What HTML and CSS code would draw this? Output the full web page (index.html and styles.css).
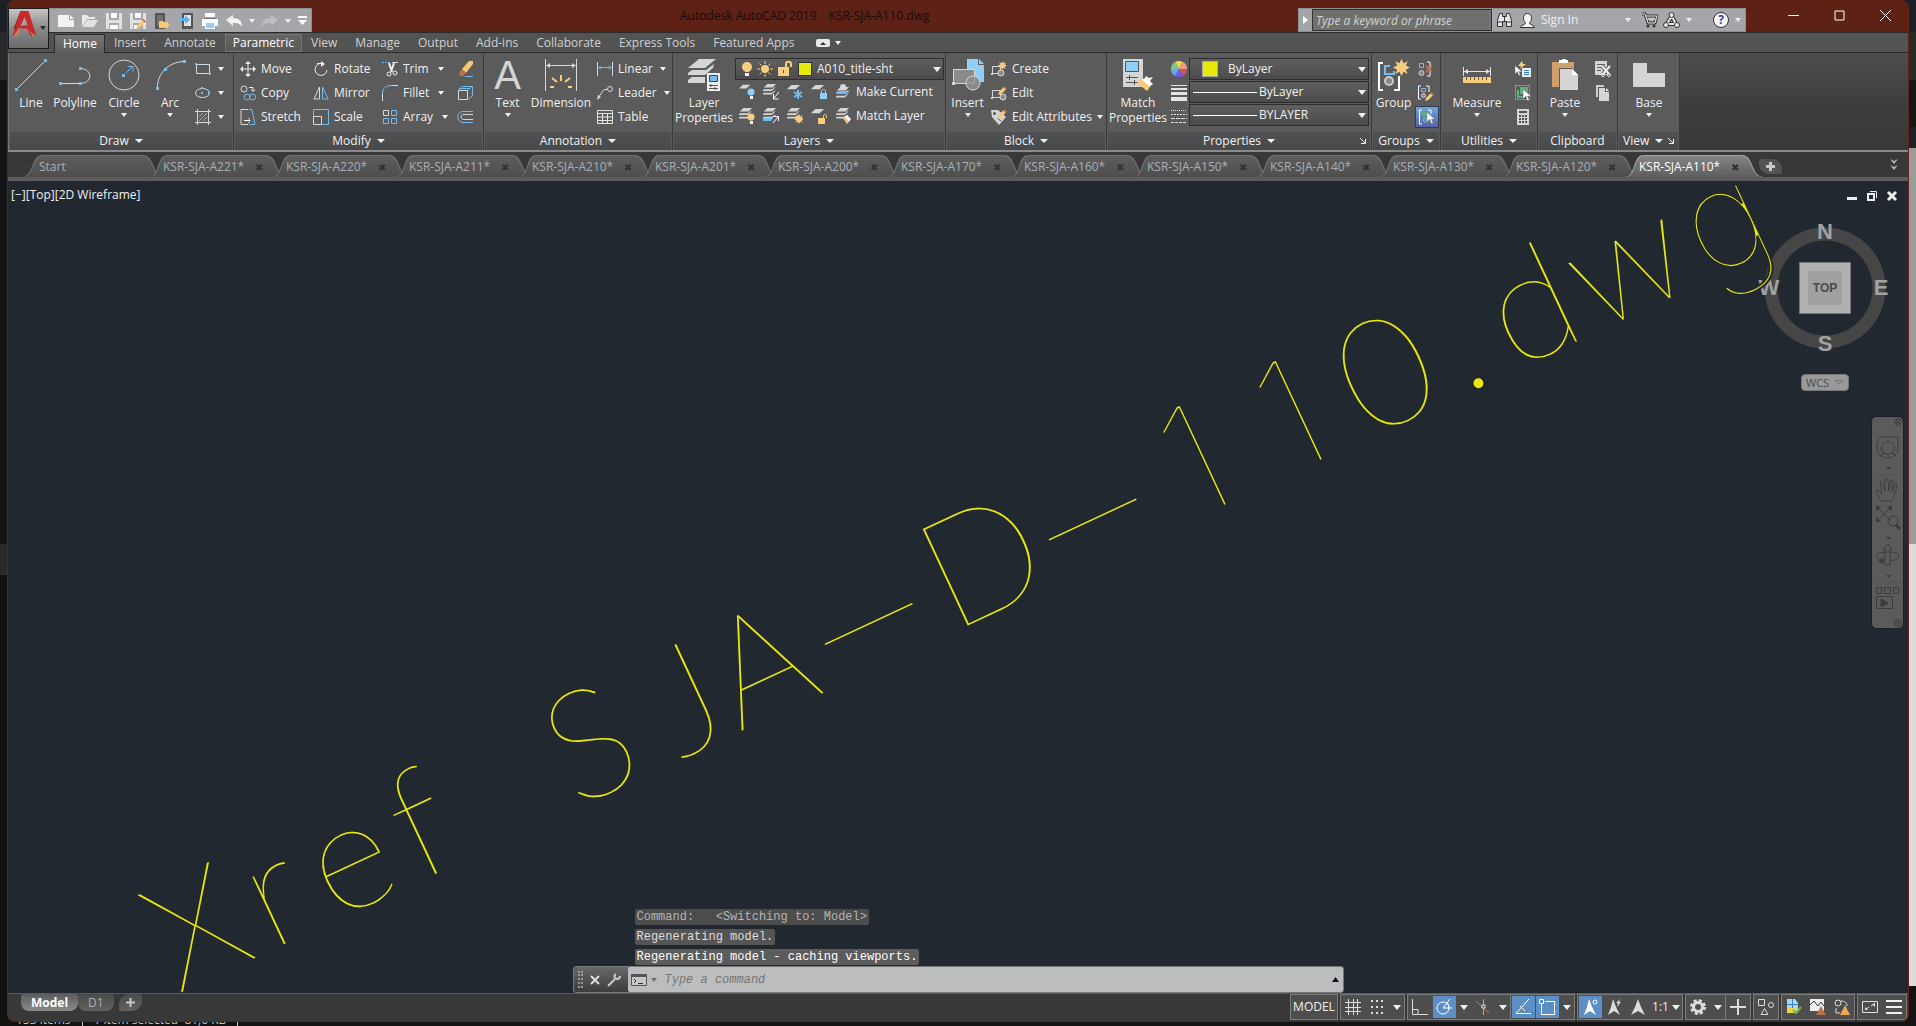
FILE: index.html
```html
<!DOCTYPE html>
<html lang="en">
<head>
  <meta charset="UTF-8">
  <meta name="viewport" content="width=device-width, initial-scale=1.0">
  <title>Autodesk AutoCAD 2019 - KSR-SJA-A110.dwg</title>
  <link rel="stylesheet" href="styles.css">
</head>
<body>

<!-- Shared shapes -->
<svg class="defs" aria-hidden="true">
  <symbol id="sheet" viewBox="0 0 16 16"><path class="g" d="M5 1h10l-5 5H0z"/></symbol>
  <symbol id="sheets" viewBox="0 0 16 16"><path class="g" d="M5 0h10l-4 4H1z"/><path class="g" d="M0 7l1-1h9l4-3v1l-4 4H0zM0 11l1-1h9l4-3v1l-4 4H0z"/></symbol>
  <symbol id="pencil" viewBox="0 0 8 8"><path fill="#f7c877" d="M0 8l1-3 4-4 2 2-4 4z"/><path fill="#b9704c" d="M5 1l1-1 2 2-1 1z"/></symbol>
  <symbol id="burst" viewBox="0 0 16 16"><path fill="#f9cd80" d="M8 0l2 4 4-2-2 4 4 2-4 2 2 4-4-2-2 4-2-4-4 2 2-4-4-2 4-2-2-4 4 2z"/></symbol>
  <symbol id="cursor" viewBox="0 0 9 13"><path fill="#fff" stroke="#555" stroke-width=".5" d="M0 0v11l3-3 2 5 2-1-2-4h4z"/></symbol>
</svg>

<div class="desktop">
  <div class="desktop-left"></div>
  <div class="desktop-right"></div>
  <p class="desktop-status"><span>153 items</span><span>1 item selected&nbsp; 81,6 KB</span></p>
</div>

<div class="window">
  <!-- Title bar -->
  <header class="titlebar">
    <button class="app-button" aria-label="Application menu">
      <svg width="25" height="28" viewBox="0 0 24 28"><path fill="#8c1518" d="M8 1h7l3 10-4 1-2-6-6 12-5 1z"/><path fill="#c8292c" d="M8 1h8l8 25h-6l-3-7-8-1-2 8H0z"/><path fill="#a2a2a2" d="M12 7l3 8-7 1z"/><path fill="#c97c5f" d="M6 18l-5 8h4l3-6zM17 21l3 5h4z"/></svg>
      <i class="caret dark"></i>
    </button>
    <div class="qat">
      <button aria-label="New"><svg width="16" height="16"><path fill="#f2f2f2" d="M0 2h11v5h5v7H0z"/><path fill="#fff" d="M12 2l4 4h-4z"/></svg></button>
      <button aria-label="Open"><svg width="16" height="16"><path fill="#e9eaea" d="M0 14V2h5l2 2h6v2H5z"/><path fill="#dfe3e2" d="M5 7h11l-4 7H1z"/></svg></button>
      <button aria-label="Save"><svg width="16" height="16"><path fill="#e1e3e3" d="M0 0h16v16H0z"/><path fill="#a5a7aa" d="M3 0h10v7H3zM3 10h10v6H3z"/><path fill="#fff" d="M5 0h6v5H5zM4 12h8v4H4z"/></svg></button>
      <button aria-label="Save As"><svg width="16" height="16"><path fill="#e1e3e3" d="M0 0h16v16H0z"/><path fill="#a5a7aa" d="M3 0h10v7H3zM3 10h10v6H3z"/><path fill="#fff" d="M5 0h6v5H5zM4 12h4v4H4z"/><use href="#pencil" x="6" y="6" width="10" height="10"/></svg></button>
      <button aria-label="Open from Web"><svg width="16" height="16"><path fill="#555" d="M1 0h10v16H1z"/><path fill="#707070" d="M3 2h6v11H3z"/><path fill="#f7c877" d="M5 15V8h4l1 1h4v2h2l-3 4z"/></svg></button>
      <button aria-label="Save to Web"><svg width="16" height="16"><path fill="#555" d="M4 0h11v16H4z"/><path fill="#e2e5e4" d="M6 2h7v11H6z"/><path fill="#5bb2ee" d="M2 5h5V2l5 5-5 4V8H2z"/></svg></button>
      <button aria-label="Plot"><svg width="16" height="16"><path fill="#fff" d="M3 0h10v4H3zM0 6h16v7H0z"/><path fill="#77797b" d="M2 5h12v1H2z"/><path fill="#8fd0fa" stroke="#fff" d="M3.500 9.500h9v6h-9z"/></svg></button>
      <button aria-label="Undo"><svg width="16" height="16"><path fill="#f2f2f2" d="M0 7l7-5v3c6 0 9 3 9 9-2-4-5-4-9-4v3z"/></svg></button>
      <button class="narrow" aria-label="Undo list"><i class="caret"></i></button>
      <button aria-label="Redo"><svg width="16" height="16"><path fill="#bcbec0" d="M16 7L9 2v3c-6 0-9 3-9 9 2-4 5-4 9-4v3z"/></svg></button>
      <button class="narrow" aria-label="Redo list"><i class="caret"></i></button>
      <button class="narrow" aria-label="Customize"><svg width="9" height="9"><path fill="#fff" d="M0 0h9v2H0zM0 4h9L4.500 9z"/></svg></button>
    </div>
    <h1 class="app-title"><span>Autodesk AutoCAD 2019</span><span>KSR-SJA-A110.dwg</span></h1>
    <div class="infocenter">
      <button class="expand" aria-label="Collapse search"><svg width="5" height="8"><path fill="#fff" d="M0 0l5 4-5 4z"/></svg></button>
      <input type="text" placeholder="Type a keyword or phrase" aria-label="Search">
      <button class="find" aria-label="Find"><svg width="17" height="16"><path fill="#e6e6e6" stroke="#333" d="M3.500 1.500h3v3h4v-3h3l2 7v6h-5v-5h-4v5h-5v-6z"/><path stroke="#333" d="M1 10h5M11 10h5M8.500 5v4"/></svg></button>
      <button class="sign-in"><svg width="17" height="16"><path fill="#f4f4f4" stroke="#333" d="M1.500 15.500c0-3 5-2 5-5-3-2-3-9 2-9s5 7 2 9c0 3 5 2 5 5z"/></svg>Sign In<i class="caret"></i></button>
      <button aria-label="App Store"><svg width="17" height="16"><path fill="none" stroke="#333" stroke-width="3" d="M1 2h3l3 9h7l2-7H5"/><path fill="none" stroke="#eee" d="M1 2h3l3 9h7l2-7H5M6 7h9"/><circle cx="7" cy="14" r="1.500" fill="#333"/><circle cx="13" cy="14" r="1.500" fill="#333"/></svg></button>
      <button class="with-caret" aria-label="Stay Connected"><svg width="17" height="16"><path fill="none" stroke="#333" stroke-width="4" stroke-linejoin="round" d="M8.500 4L4 12h9z"/><path fill="none" stroke="#e5e5e5" stroke-width="2" stroke-linejoin="round" d="M8.500 4L4 12h9z"/><g fill="#e5e5e5" stroke="#333"><circle cx="8.500" cy="3" r="2.500"/><circle cx="3" cy="13" r="2.500"/><circle cx="14" cy="13" r="2.500"/></g></svg><i class="caret"></i></button>
      <button class="with-caret help" aria-label="Help"><b>?</b><i class="caret"></i></button>
    </div>
    <div class="window-buttons">
      <button aria-label="Minimize"><svg width="11" height="11"><path stroke="#fff" d="M0 5.500h11"/></svg></button>
      <button aria-label="Maximize"><svg width="11" height="11"><path fill="none" stroke="#fff" d="M1 1h9v9H1z"/></svg></button>
      <button aria-label="Close"><svg width="11" height="11"><path stroke="#fff" d="M0 0l11 11M11 0L0 11"/></svg></button>
    </div>
  </header>

  <!-- Ribbon tabs -->
  <nav class="ribbon-tabs">
    <button class="active">Home</button>
    <button>Insert</button>
    <button>Annotate</button>
    <button class="hover">Parametric</button>
    <button>View</button>
    <button>Manage</button>
    <button>Output</button>
    <button>Add-ins</button>
    <button>Collaborate</button>
    <button>Express Tools</button>
    <button>Featured Apps</button>
    <button class="ribbon-toggle" aria-label="Minimize ribbon"><svg width="14" height="8"><rect width="14" height="8" rx="2" fill="#e8e8e8"/><path fill="#333" d="M4 6l3-3 3 3z"/></svg><i class="caret"></i></button>
  </nav>

  <!-- Ribbon panels -->
  <main class="ribbon">
    <section class="panel draw">
      <div class="tools">
        <button class="big line"><svg width="32" height="32"><path stroke="#d8d8d8" d="M3 29L29 3"/><path class="b" d="M0 29h3v3H0zM29 0h3v3h-3z"/></svg>Line</button>
        <button class="big polyline"><svg width="32" height="32"><path fill="none" stroke="#d8d8d8" d="M1 24.500h20M21 9.500c13 0 13 15 0 15"/><path class="b" d="M0 23h3v3H0zM20 23h3v3h-3zM20 8h3v3h-3z"/></svg>Polyline</button>
        <button class="big circle"><svg width="32" height="32"><circle cx="16" cy="16" r="15" fill="none" stroke="#d8d8d8"/><path stroke="#74bcf0" d="M18 14l6-6M20 7.500h5v5" fill="none"/><path class="b" d="M14 15h3v3h-3z"/></svg>Circle<i class="caret"></i></button>
        <button class="big arc"><svg width="32" height="32"><path fill="none" stroke="#d8d8d8" d="M3.500 29C3 15 14 3 30 2.500"/><path class="b" d="M2 28h3v3H2zM10 9h3v3h-3zM29 1h3v3h-3z"/></svg>Arc<i class="caret"></i></button>
        <div class="stack">
          <button class="small" aria-label="Rectangle"><svg width="16" height="16"><path fill="none" stroke="#d8d8d8" d="M1.500 3.500h13v9h-13z"/><path class="b" d="M0 2h2v2H0zM14 12h2v2h-2z"/></svg><i class="caret"></i></button>
          <button class="small" aria-label="Ellipse"><svg width="16" height="16"><ellipse cx="7.500" cy="8" rx="7" ry="4.500" fill="none" stroke="#d8d8d8"/><path class="b" d="M6 2h2v2H6zM6 7h2v2H6zM13 7h2v2h-2z"/></svg><i class="caret"></i></button>
          <button class="small" aria-label="Hatch"><svg width="16" height="16"><path fill="none" stroke="#d8d8d8" d="M2.500 0v16M13.500 0v16M0 2.500h16M0 13.500h16"/><path stroke="#74bcf0" d="M4 8l4-4M4 12l8-8M8 12l4-4"/></svg><i class="caret"></i></button>
        </div>
      </div>
      <h2>Draw<i class="caret"></i></h2>
    </section>

    <section class="panel modify">
      <div class="tools">
        <div class="stack">
          <button class="small"><svg width="16" height="16"><path fill="none" stroke="#eee" d="M8 1v14M1 8h14"/><path fill="#eee" d="M8 0l3 3H5zM8 16l3-3H5zM0 8l3-3v6zM16 8l-3-3v6z"/></svg>Move</button>
          <button class="small"><svg width="16" height="16"><circle cx="4" cy="4" r="3" fill="none" stroke="#d8d8d8"/><path fill="none" stroke="#eee" d="M9 2.500h4V6M11 4.500l2 2 2-2"/><circle cx="7" cy="12" r="3" fill="none" stroke="#74bcf0"/><circle cx="12.500" cy="12" r="3" fill="none" stroke="#74bcf0"/></svg>Copy</button>
          <button class="small"><svg width="16" height="16"><path fill="none" stroke="#d8d8d8" d="M8 .5H1v15h7"/><path stroke="#fff" d="M4 11.500h6M8 9l2 2.500L8 14"/><path fill="none" stroke="#74bcf0" d="M9 .5h3l3 15H9"/></svg>Stretch</button>
        </div>
        <div class="stack">
          <button class="small"><svg width="16" height="16"><path fill="none" stroke="#eee" d="M9 2.500A6 6 0 1 0 14 9M9 2.500H4"/><path fill="#eee" d="M8 0l4 3-4 3z"/></svg>Rotate</button>
          <button class="small"><svg width="16" height="16"><path fill="none" stroke="#d8d8d8" d="M6.500 2v12H1z"/><path fill="none" stroke="#74bcf0" d="M9.500 2v12H15z"/></svg>Mirror</button>
          <button class="small"><svg width="16" height="16"><path fill="none" stroke="#74bcf0" d="M.5 7V.5h15v15H9"/><path fill="none" stroke="#d8d8d8" d="M.5 7.500h8v8h-8z"/></svg>Scale</button>
        </div>
        <div class="stack">
          <button class="small"><svg width="16" height="16"><path stroke="#74bcf0" stroke-dasharray="2 1" d="M0 1.500h8"/><path stroke="#d8d8d8" d="M10 1.500h6"/><path stroke="#eee" stroke-width="2" d="M7 2l3 9M12 2L9 11"/><circle cx="7" cy="13" r="2" fill="none" stroke="#eee"/><circle cx="13" cy="12" r="2" fill="none" stroke="#eee"/></svg>Trim<i class="caret"></i></button>
          <button class="small"><svg width="16" height="16"><path stroke="#d8d8d8" d="M.5 9v7M10 .5h6"/><path fill="none" stroke="#74bcf0" d="M.5 9C.5 3 4 .5 10 .5"/></svg>Fillet<i class="caret"></i></button>
          <button class="small"><svg width="16" height="16"><path fill="none" stroke="#d8d8d8" d="M1.500 1.500h5v5h-5z"/><path fill="none" stroke="#74bcf0" d="M9.500 1.500h5v5h-5zM1.500 9.500h5v5h-5zM9.500 9.500h5v5h-5z"/></svg>Array<i class="caret"></i></button>
        </div>
        <div class="stack">
          <button class="small" aria-label="Erase"><svg width="16" height="16"><path fill="#f7c877" d="M5 8l7-8h4v3l-7 9z"/><path fill="#b9704c" d="M2 12l3-4 4 4-3 3H3z"/><path stroke="#74bcf0" d="M8 15.500h8"/></svg></button>
          <button class="small" aria-label="Explode"><svg width="16" height="16"><path fill="none" stroke="#74bcf0" d="M1.500 5l4-3.500h10v9l-4 4M11 5l4-3.500M2 3.500h10"/><path fill="none" stroke="#d8d8d8" d="M1.500 5.500h9v9h-9z"/></svg></button>
          <button class="small" aria-label="Offset"><svg width="16" height="16"><path fill="none" stroke="#74bcf0" d="M16 2.500H6c-7 0-7 11 0 11h10"/><path fill="none" stroke="#d8d8d8" d="M16 5.500H7c-4 0-4 5 0 5h9"/></svg></button>
        </div>
      </div>
      <h2>Modify<i class="caret"></i></h2>
    </section>

    <section class="panel annotation">
      <div class="tools">
        <button class="big text"><span class="letter-icon" aria-hidden="true">A</span>Text<i class="caret"></i></button>
        <button class="big dimension"><svg width="32" height="32"><path stroke="#d8d8d8" d="M.5 0v32M31.500 0v32M2 6.500h28"/><path fill="#d8d8d8" d="M1 6.500L5 4v5zM31 6.500L27 4v5z"/><path stroke="#f9cd80" stroke-width="2" d="M5 28h4M23 28h4M7 19l5 4M25 19l-5 4M16 16v6"/></svg>Dimension</button>
        <div class="stack">
          <button class="small"><svg width="16" height="16"><path stroke="#d8d8d8" d="M.5 1v14M15.500 1v14"/><path stroke="#74bcf0" d="M2 6.500h12M4 4.500l-2 2 2 2M12 4.500l2 2-2 2" fill="none"/></svg>Linear<i class="caret"></i></button>
          <button class="small"><svg width="16" height="16"><circle cx="13" cy="4" r="2.500" fill="none" stroke="#d8d8d8"/><path fill="none" stroke="#d8d8d8" d="M10 4.500H7L1 13"/><path fill="#d8d8d8" d="M0 15l1-5 3 2z"/></svg>Leader<i class="caret"></i></button>
          <button class="small"><svg width="16" height="16"><path fill="none" stroke="#e4e4e4" d="M.5 1.500h15v13H.5zM0 4.500h16M0 8h16M0 11.500h16M5.500 4v10M10.500 4v10"/></svg>Table</button>
        </div>
      </div>
      <h2>Annotation<i class="caret"></i></h2>
    </section>

    <section class="panel layers">
      <div class="tools">
        <button class="big layer-props"><svg width="32" height="32"><path class="g" d="M11 0h17L17 9H0zM0 14l4-3h14l8-6-1 4-8 7H0zM0 21l4-3h13v6H0z"/><path fill="#eee" d="M19 14h13v18H19z"/><path fill="#74bcf0" stroke="#444" d="M21.500 16.500h8v6h-8z"/><path stroke="#555" d="M21 26.500h9M21 29.500h9M23 25v3M27 28v3"/></svg>Layer Properties</button>
        <div class="layer-area">
          <div class="combo layer-combo">
            <svg width="62" height="16"><circle cx="6" cy="6" r="5" fill="#f9cd80"/><path fill="#fff" d="M4 12h4v3H4z"/><path fill="#f9cd80" d="M4 9h4v2H4z"/><circle cx="24" cy="8" r="4" fill="#f9cd80"/><path stroke="#f9cd80" d="M24 0v3M24 13v3M16 8h3M29 8h3M18.500 2.500l2 2M27.500 11.500l2 2M29.500 2.500l-2 2M20.500 11.500l-2 2"/><path fill="#f9cd80" d="M37 6h11v9H37z"/><path fill="none" stroke="#f9cd80" stroke-width="2" d="M45 6V3c0-3 5-3 5 0v3"/><path stroke="#555" d="M42.500 9v3"/></svg>
            <i class="swatch"></i>
            <select aria-label="Layer"><option>A010_title-sht</option></select>
          </div>
          <div class="layer-row">
            <button aria-label="Off"><svg width="16" height="16"><use href="#sheet" width="12" height="12"/><circle cx="12" cy="8" r="3.500" fill="#8fd0fa"/><path fill="#fff" d="M11 12h3v3h-3z"/></svg></button>
            <button aria-label="Isolate"><svg width="16" height="16"><use href="#sheets" width="14" height="14"/><path fill="none" stroke="#fff" d="M16 8l-5 6M10.500 10v5h5"/></svg></button>
            <button aria-label="Freeze"><svg width="16" height="16"><use href="#sheet" width="14" height="14"/><path stroke="#74bcf0" stroke-width="2" d="M11 6v9M7 8l8 5M15 8l-8 5"/></svg></button>
            <button aria-label="Lock"><svg width="16" height="16"><use href="#sheet" width="14" height="14"/><path fill="#8fd0fa" d="M9 9h7v6H9z"/><path fill="none" stroke="#8fd0fa" d="M10.500 9V7c0-2 4-2 4 0v2"/></svg></button>
            <button class="labelled"><svg width="16" height="16"><use href="#sheets" y="3" width="16" height="14"/><circle cx="8" cy="3" r="3" fill="#d8d8d8"/><path fill="#74bcf0" d="M3 7h12l-4 3H1z"/></svg>Make Current</button>
          </div>
          <div class="layer-row">
            <button aria-label="On"><svg width="16" height="16"><use href="#sheets" width="14" height="14"/><circle cx="12" cy="9" r="3.500" fill="#f9cd80"/><path fill="#fff" d="M11 13h3v3h-3z"/></svg></button>
            <button aria-label="Unisolate"><svg width="16" height="16"><use href="#sheets" width="14" height="14"/><path fill="#74bcf0" d="M0 10h10l-2 3H0z"/><path fill="none" stroke="#fff" d="M10 15l5-6M11 8.500h4.500V13"/></svg></button>
            <button aria-label="Thaw"><svg width="16" height="16"><use href="#sheets" width="14" height="14"/><use href="#burst" x="7" y="6" width="10" height="10"/></svg></button>
            <button aria-label="Unlock"><svg width="16" height="16"><use href="#sheet" width="14" height="14"/><path fill="#f9cd80" d="M7 10h7v6H7z"/><path fill="none" stroke="#f9cd80" d="M12.500 10V8c0-2 3-2 3 0v2"/></svg></button>
            <button class="labelled"><svg width="16" height="16"><use href="#sheets" width="16" height="14"/><path fill="#fff" d="M9 9l3-2 4 4-2 3z"/><path fill="#f7c877" d="M8 10l2-1 4 5-2 2z"/></svg>Match Layer</button>
          </div>
        </div>
      </div>
      <h2>Layers<i class="caret"></i></h2>
    </section>

    <section class="panel block">
      <div class="tools">
        <button class="big insert"><svg width="32" height="32"><path fill="#8fd0fa" d="M15 0h11v6h6v17H15z"/><path fill="#8fd0fa" d="M27 0l5 5h-5z"/><path fill="#8a8a8a" stroke="#d8d8d8" d="M1.500 10.500h21v14h-21z"/><circle cx="21" cy="24" r="7" fill="#8a8a8a" stroke="#d8d8d8"/><path stroke="#aaa" d="M22.500 17v7H14" fill="none"/><path class="g" d="M0 23h3v3H0z"/></svg>Insert<i class="caret"></i></button>
        <div class="stack">
          <button class="small"><svg width="16" height="16"><path fill="none" stroke="#d8d8d8" d="M1.500 5.500h8v7h-8z"/><circle cx="10" cy="12" r="3" fill="#8a8a8a" stroke="#d8d8d8"/><path class="g" d="M0 12h2v2H0z"/><use href="#burst" x="7" y="0" width="9" height="9"/></svg>Create</button>
          <button class="small"><svg width="16" height="16"><path fill="none" stroke="#d8d8d8" d="M1.500 5.500h8v7h-8z"/><circle cx="12" cy="12" r="3" fill="#8a8a8a" stroke="#d8d8d8"/><path class="g" d="M0 12h2v2H0z"/><use href="#pencil" x="7" y="1" width="9" height="9"/></svg>Edit</button>
          <button class="small"><svg width="16" height="16"><path class="g" d="M0 1h7l8 7-7 8-7-8z"/><circle cx="3.500" cy="4.500" r="1.500" fill="#5a5a5a"/><path stroke="#5a5a5a" d="M6 9l4 3"/><use href="#pencil" x="6" y="0" width="10" height="10"/></svg>Edit Attributes<i class="caret"></i></button>
        </div>
      </div>
      <h2>Block<i class="caret"></i></h2>
    </section>

    <section class="panel properties">
      <div class="tools">
        <button class="big match"><svg width="32" height="32"><path class="g" d="M1 0h20v28H1z"/><path fill="#8fd0fa" stroke="#555" d="M3.500 2.500h13v10h-13z"/><path stroke="#555" d="M4 18.500h12M4 23.500h12M7.500 16v5M12.500 21v5"/><path fill="#fff" d="M19 21l4-2 1-2 3 2 4-1-3 4 3 3-4 3z"/><path fill="#f7c877" d="M15 24l4-4 9 8-3 4z"/></svg>Match Properties</button>
        <div class="stack icons">
          <span class="small"><svg width="16" height="16"><path fill="#f1d24b" d="M8 8L4 1a8 8 0 0 1 8 0z"/><path fill="#e7a07b" d="M8 8l4-7a8 8 0 0 1 4 7z"/><path fill="#c9555f" d="M8 8h8a8 8 0 0 1-4 7z"/><path fill="#7555ef" d="M8 8l4 7a8 8 0 0 1-8 0z"/><path fill="#6ea5ea" d="M8 8l-4 7a8 8 0 0 1-4-7z"/><path fill="#7cc693" d="M8 8H0a8 8 0 0 1 4-7z"/></svg></span>
          <span class="small"><svg width="16" height="16"><path fill="#e4e4e4" d="M0 0h16v1H0zM0 3h16v2H0zM0 7h16v3H0zM0 12h16v4H0z"/></svg></span>
          <span class="small"><svg width="16" height="16"><path stroke="#ddd" stroke-dasharray="1 1" d="M0 1.500h16"/><path stroke="#ddd" stroke-dasharray="2 1" d="M0 5.500h16"/><path stroke="#ddd" stroke-dasharray="4 1" d="M0 9.500h16"/><path stroke="#ddd" stroke-dasharray="3 1" d="M0 13.500h16"/></svg></span>
        </div>
        <div class="combos">
          <div class="combo color-combo"><i class="swatch"></i><select aria-label="Object color"><option>ByLayer</option></select></div>
          <div class="combo"><i class="rule"></i><select aria-label="Lineweight"><option>ByLayer</option></select></div>
          <div class="combo"><i class="rule"></i><select aria-label="Linetype"><option>BYLAYER</option></select></div>
        </div>
      </div>
      <h2>Properties<i class="caret"></i><svg class="launcher" width="6" height="6"><path fill="none" stroke="#eee" d="M0 0l5 5M5.500 1v4.500H1"/></svg></h2>
    </section>

    <section class="panel groups">
      <div class="tools">
        <button class="big group"><svg width="34" height="32"><path fill="none" stroke="#fff" stroke-width="2" d="M6 4H2v27h4M17 31h5V17"/><path fill="none" stroke="#74bcf0" stroke-width="2" d="M13 7H8v8h9v-3"/><circle cx="12" cy="22" r="4" fill="#888" stroke="#ccc" stroke-width="2"/><use href="#burst" x="16" y="0" width="17" height="17"/></svg>Group</button>
        <div class="stack">
          <button class="small" aria-label="Ungroup"><svg width="16" height="16"><path fill="none" stroke="#74bcf0" d="M1.500 2.500h4v4h-4z"/><circle cx="3.500" cy="12" r="2.500" fill="#888" stroke="#ccc"/><path fill="none" stroke="#fff" d="M9 1h3v14H9"/><path stroke="#b9704c" stroke-width="2" d="M8 5l6 6M14 5l-6 6"/></svg></button>
          <button class="small" aria-label="Group Edit"><svg width="16" height="16"><path fill="none" stroke="#fff" d="M3 1H.5v13H3M8 1h3v6"/><path fill="none" stroke="#74bcf0" d="M3.500 3.500h4v3h-4z"/><circle cx="5.500" cy="10.500" r="2" fill="#888" stroke="#ccc"/><use href="#pencil" x="7" y="7" width="9" height="9"/></svg></button>
          <button class="small selected" aria-label="Group Selection"><svg width="16" height="16"><path fill="none" stroke="#fff" d="M3 1H.5v14H3M9 1h3v4"/><path fill="#5fae7b" d="M3 3h6v4H3z"/><circle cx="6" cy="11" r="2" fill="none" stroke="#7cc693"/><use href="#cursor" x="8" y="3" width="8" height="12"/></svg></button>
        </div>
      </div>
      <h2>Groups<i class="caret"></i></h2>
    </section>

    <section class="panel utilities">
      <div class="tools">
        <button class="big measure"><svg width="32" height="32"><path stroke="#e4e4e4" d="M2.500 8v9M29.500 8v9M3 12.500h26"/><path fill="#e4e4e4" d="M3 12.500L7 10v5zM29 12.500L25 10v5z"/><path fill="#f9cd80" d="M2 18h28v6H2z"/><path stroke="#6b5a35" d="M5.500 18v3M9.500 18v3M13.500 18v3M17.500 18v3M21.500 18v3M25.500 18v3"/></svg>Measure<i class="caret"></i></button>
        <div class="stack">
          <button class="small" aria-label="Quick Select"><svg width="16" height="16"><path fill="#f9cd80" d="M7 0l-4 5h3L5 8l6-5H8z"/><path fill="#eee" d="M7 7h9v9H7z"/><path stroke="#3c7fc0" d="M9 9.500h5M9 11.500h5M9 13.500h5"/><use href="#cursor" y="4" width="7" height="11"/></svg></button>
          <button class="small" aria-label="Select All"><svg width="16" height="16"><path fill="none" stroke="#7cc693" stroke-dasharray="2 1" d="M.5 .5h14v14H.5z"/><path fill="#5fae7b" d="M5 2h8v7H5z"/><path fill="none" stroke="#5fae7b" stroke-width="2" d="M3 5v7h7"/><use href="#cursor" x="8" y="4" width="8" height="12"/></svg></button>
          <button class="small" aria-label="Calculator"><svg width="16" height="16"><path class="g" d="M2 0h12v16H2z"/><path fill="#555" d="M4 2h8v2H4zM4 6h2v2H4zM7 6h2v2H7zM10 6h2v2h-2zM4 9h2v2H4zM7 9h2v2H7zM10 9h2v2h-2zM4 12h2v2H4zM7 12h2v2H7zM10 12h2v2h-2z"/></svg></button>
        </div>
      </div>
      <h2>Utilities<i class="caret"></i></h2>
    </section>

    <section class="panel clipboard">
      <div class="tools">
        <button class="big paste"><svg width="28" height="32"><path fill="#cfa06a" d="M1 3h22v25H1z"/><path fill="#fff" d="M8 1h3c1-2 3-2 4 0h2v3H8z"/><path class="g" stroke="#5a5a5a" d="M8.500 9.500h13l6 6v16h-19z"/><path fill="#fff" d="M21 10v6h6z"/></svg>Paste<i class="caret"></i></button>
        <div class="stack">
          <button class="small" aria-label="Cut"><svg width="16" height="16"><path class="g" d="M0 0h12v14H0z"/><path stroke="#666" d="M2 3.500h8M2 6.500h5M2 9.500h4"/><path stroke="#5b5b5b" stroke-width="4" d="M7 5l7 8M15 5l-7 8"/><path stroke="#eee" stroke-width="2" d="M7 5l7 8M15 5l-7 8"/><circle cx="8" cy="14" r="1.500" fill="none" stroke="#eee"/><circle cx="14" cy="14" r="1.500" fill="none" stroke="#eee"/></svg></button>
          <button class="small" aria-label="Copy Clip"><svg width="16" height="16"><path fill="#ccc" d="M1 0h8v2H3v10H1z"/><path class="g" d="M4 3h6v4h4v9H4z"/><path fill="#fff" d="M11 3l3 3h-3z"/></svg></button>
        </div>
      </div>
      <h2>Clipboard</h2>
    </section>

    <section class="panel view">
      <div class="tools">
        <button class="big base"><svg width="32" height="32"><path class="g" d="M0 4h14v10h18v14H0z"/></svg>Base<i class="caret"></i></button>
      </div>
      <h2>View<i class="caret"></i><svg class="launcher" width="6" height="6"><path fill="none" stroke="#eee" d="M0 0l5 5M5.500 1v4.500H1"/></svg></h2>
    </section>
  </main>

  <!-- Drawing tabs -->
  <nav class="file-tabs">
    <button class="file-tab start">Start</button>
    <button class="file-tab">KSR-SJA-A221*<i>✖</i></button>
    <button class="file-tab">KSR-SJA-A220*<i>✖</i></button>
    <button class="file-tab">KSR-SJA-A211*<i>✖</i></button>
    <button class="file-tab">KSR-SJA-A210*<i>✖</i></button>
    <button class="file-tab">KSR-SJA-A201*<i>✖</i></button>
    <button class="file-tab">KSR-SJA-A200*<i>✖</i></button>
    <button class="file-tab">KSR-SJA-A170*<i>✖</i></button>
    <button class="file-tab">KSR-SJA-A160*<i>✖</i></button>
    <button class="file-tab">KSR-SJA-A150*<i>✖</i></button>
    <button class="file-tab">KSR-SJA-A140*<i>✖</i></button>
    <button class="file-tab">KSR-SJA-A130*<i>✖</i></button>
    <button class="file-tab">KSR-SJA-A120*<i>✖</i></button>
    <button class="file-tab active">KSR-SJA-A110*<i>✖</i></button>
    <button class="new-tab" aria-label="New tab"><svg width="9" height="9"><path stroke="#c8c8c8" stroke-width="3" d="M4.500 0v9M0 4.500h9"/></svg></button>
    <button class="tab-overflow" aria-label="More tabs"><svg width="8" height="12"><path fill="#b5b5b5" d="M0 0l4 2 4-2-4 5zM0 6l4 2 4-2-4 5z"/></svg></button>
  </nav>

  <!-- Model space -->
  <section class="canvas">
    <p class="viewport-label">[&minus;][Top][2D Wireframe]</p>
    <div class="viewport-buttons">
      <button aria-label="Minimize view"><svg width="12" height="12"><path fill="#eee" d="M1 7h10v3H1z"/></svg></button>
      <button aria-label="Restore view"><svg width="12" height="12"><path fill="none" stroke="#eee" stroke-width="2" d="M2 4h6v6H2z"/><path fill="none" stroke="#eee" d="M4 1.500h6.500V8"/></svg></button>
      <button aria-label="Close view"><svg width="12" height="12"><path stroke="#eee" stroke-width="3" d="M2 2l8 8M10 2l-8 8"/></svg></button>
    </div>
    <div class="viewcube">
      <div class="compass">
        <b class="n">N</b><b class="w">W</b><button class="cube">TOP</button><b class="e">E</b><b class="s">S</b>
      </div>
      <button class="wcs">WCS<svg width="9" height="5"><path fill="none" stroke="#777" d="M0 .5h8L4 4z"/></svg></button>
    </div>
    <div class="navbar">
      <svg width="31" height="211" fill="none" stroke="#3c3c3c">
        <circle cx="26" cy="5" r="3.500"/><path d="M24 3l4 4M28 3l-4 4"/>
        <path d="M26 21v10c0 13-21 13-21 0s6-11 11-11h10z"/><circle cx="16" cy="31" r="6.500"/><path d="M8 39l4-3M24 39l-4-3"/>
        <path fill="#3c3c3c" stroke="none" d="M14 50h5l-2.500 3zM14 120h5l-2.500 3zM14 158h5l-2.500 3z"/>
        <path stroke="#555" d="M4 57.500h24M4 165.500h24"/>
        <path d="M9 84c-2-6-8-9-3-11l4 4-2-12c2-2 3 0 5 9 0-13 0-13 3-12l1 12 2-11c3 0 2 2 1 12l4-9c2 1 1 3-1 10-1 4-2 6-4 8z"/>
        <path d="M5 90l14 14M19 90L5 104"/><path fill="#3c3c3c" stroke="none" d="M4 89h5l-5 5zM20 89h-5l5 5zM4 105h5l-5-5z"/><circle cx="21" cy="104" r="5"/><path stroke-width="3" d="M24 108l4 4"/>
        <path d="M13 148v-16h-2l5-5 4 5h-2v16zM10 144c-9-3-7-9 6-9s15 7 2 9"/><path fill="#3c3c3c" d="M7 144l4-3v6z"/>
        <path d="M4.500 170.500h5v6h-5zM12.500 170.500h6v6h-6zM21.500 170.500h5v6h-5zM4.500 179.500h16v12h-16z"/><path fill="#3c3c3c" d="M9 182l7 4-7 4z"/>
        <circle cx="26" cy="206" r="3.500"/><path d="M24 205h4M24 207h4"/>
      </svg>
    </div>
    <svg class="drawing">
      <g transform="translate(178 809) rotate(-25)">
        <text x="-10 94 164 257">Xref</text>
        <text x="430 545 610 714 845 961">SJA—D—</text>
        <text class="plain" x="1110 1216">11</text>
        <text x="1304 1410 1466 1555">0.dw</text>
        <text class="plain tail" x="1679">g</text>
      </g>
    </svg>
    <div class="command">
      <p class="old">Command:&nbsp;&nbsp; &lt;Switching to: Model&gt;</p>
      <p class="mid">Regenerating model.</p>
      <p>Regenerating model - caching viewports.</p>
      <div class="command-bar">
        <i class="grip"></i>
        <button aria-label="Close"><svg width="10" height="10"><path stroke="#ddd" stroke-width="2" d="M1 1l8 8M9 1L1 9"/></svg></button>
        <button aria-label="Customize"><svg width="14" height="14"><path stroke="#ccc" stroke-width="2" d="M1 13l7-7"/><path fill="none" stroke="#ccc" stroke-width="2" d="M9 1c-3 2-1 5 1 5s3-1 3-3"/></svg></button>
        <div class="command-entry">
          <svg width="16" height="12"><path fill="#c6c7c9" stroke="#555" d="M.5 .5h15v11H.5z"/><path fill="#555" d="M0 0h16v3H0z"/><path fill="none" stroke="#333" d="M3 5l2 2-2 2M7 9.500h5"/></svg>
          <i class="caret gray"></i>
          <input type="text" placeholder="Type a command" aria-label="Command line">
          <svg width="7" height="5"><path fill="#111" d="M0 5l3.500-5L7 5z"/></svg>
        </div>
      </div>
    </div>
  </section>

  <!-- Layout tabs and status bar -->
  <footer class="bottombar">
    <div class="layout-tabs">
      <button class="active">Model</button>
      <button>D1</button>
      <button class="add" aria-label="New layout"><svg width="9" height="9"><path stroke="#c8c8c8" stroke-width="2" d="M4.500 0v9M0 4.500h9"/></svg></button>
    </div>
    <div class="status">
      <div class="cell"><button class="model">MODEL</button></div>
      <div class="cell">
        <button aria-label="Grid"><svg width="16" height="16"><path stroke="#ddd" d="M3.500 0v16M8.500 0v16M12.500 0v16M0 3.500h16M0 8.500h16M0 12.500h16"/></svg></button>
        <button aria-label="Snap"><svg width="16" height="16"><path stroke="#ddd" stroke-width="2" stroke-dasharray="2 3" d="M2 2h13M2 8h13M2 14h13"/></svg></button>
        <button class="drop" aria-label="Snap settings"><i class="caret"></i></button>
      </div>
      <div class="cell joined">
        <button aria-label="Ortho"><svg width="16" height="16"><path fill="none" stroke="#ddd" d="M.5 0v15.500H16M1 10.500h5v5"/></svg></button>
        <button class="on" aria-label="Polar"><svg width="16" height="16"><circle cx="7" cy="9" r="6" fill="none" stroke="#fff"/><path fill="none" stroke="#fff" d="M14 0L7 9h9M11 4c2 1 2 3 2 5"/></svg></button>
        <button class="drop" aria-label="Polar settings"><i class="caret"></i></button>
        <button aria-label="Isometric"><svg width="16" height="16"><path stroke="#c07a5a" d="M1 2l13 12"/><path stroke="#7cc693" d="M8.500 0v16"/><path fill="#555" stroke="#ddd" d="M7 6h3v3H7z"/></svg></button>
        <button class="drop" aria-label="Isometric settings"><i class="caret"></i></button>
      </div>
      <div class="cell">
        <button class="on" aria-label="Object snap tracking"><svg width="16" height="16"><path fill="none" stroke="#fff" d="M14 0L1 14.500h15M5 7l5 5"/></svg></button>
        <button class="on" aria-label="Object snap"><svg width="16" height="16"><path fill="none" stroke="#fff" d="M2.500 5v10.500h13V2.500H6M.5 .5h4v4h-4z"/></svg></button>
        <button class="drop" aria-label="Object snap settings"><i class="caret"></i></button>
      </div>
      <div class="cell">
        <button class="on" aria-label="Annotation visibility"><svg width="16" height="16"><path fill="#fff" d="M7 0l3 8 4 8-6-4-6 4 3-8z"/><circle cx="13" cy="3" r="2" fill="none" stroke="#fff"/></svg></button>
        <button aria-label="Auto scale"><svg width="16" height="16"><path fill="#ddd" d="M7 0l3 8 4 8-6-4-6 4 3-8zM14 0l-4 4h2l-1 4 4-5h-2z"/></svg></button>
        <button aria-label="Annotation scale"><svg width="16" height="16"><path fill="#ddd" d="M8 0l3 8 4 8-7-4-7 4 4-8z"/></svg></button>
        <button class="scale">1:1<i class="caret"></i></button>
      </div>
      <div class="cell joined">
        <button aria-label="Workspace"><svg width="16" height="16"><circle cx="8" cy="8" r="4.500" fill="none" stroke="#ddd" stroke-width="3"/><circle cx="8" cy="8" r="6.500" fill="none" stroke="#ddd" stroke-width="3" stroke-dasharray="3 2.100"/></svg></button>
        <button class="drop" aria-label="Workspace list"><i class="caret"></i></button>
      </div>
      <div class="cell"><button aria-label="Annotation monitor"><svg width="16" height="16"><path stroke="#ddd" stroke-width="2" d="M8 0v16M0 8h16"/></svg></button></div>
      <div class="cell"><button aria-label="Isolate objects"><svg width="16" height="16"><path fill="none" stroke="#ddd" d="M.5 .5h6v6h-6zM6.500 9.500l3.500 6H3z"/><circle cx="13" cy="6" r="2.500" fill="none" stroke="#ddd"/></svg></button></div>
      <div class="cell">
        <button aria-label="Hardware acceleration"><svg width="16" height="16"><path fill="#a5d8fa" d="M1 0h8l3 4v8H1z"/><path stroke="#3c7fc0" d="M1 5.500h11M6.500 0v12"/><path fill="#f1d24b" d="M1 9h8v5H1z"/><path fill="none" stroke="#7cb83c" stroke-width="2" d="M7 11l3 3 5-6"/></svg></button>
        <button aria-label="Isolate warning"><svg width="16" height="16"><path fill="#eee" d="M0 0h14v12H0z"/><path fill="none" stroke="#333" d="M0 6l4-4 4 5 3-4 3 4"/><path fill="#b9704c" d="M11 7l5 9H6z"/></svg></button>
        <button aria-label="Xref notification"><svg width="16" height="16"><circle cx="4" cy="4" r="3" fill="none" stroke="#ddd"/><path fill="none" stroke="#ddd" d="M7 2c4 0 6 2 6 5M2 9v5h4"/><path fill="#e9aa55" d="M11 6l5 10H6z"/></svg></button>
      </div>
      <div class="cell">
        <button aria-label="Clean screen"><svg width="16" height="16"><path fill="none" stroke="#ddd" d="M.5 2.500h15v11H.5zM3 11l4-3M9 7l4-3"/><path fill="#ddd" d="M3 8v3h3zM10 5h3v3z"/></svg></button>
        <button aria-label="Customization"><svg width="16" height="16"><path stroke="#eee" stroke-width="2" d="M0 2h16M0 8h16M0 14h16"/></svg></button>
      </div>
    </div>
  </footer>
</div>

</body>
</html>
```
FILE: styles.css
```css
/* General Styles */
* {
  margin: 0;
  padding: 0;
  box-sizing: border-box;
}

body {
  font-family: "Open Sans", "Noto Sans", sans-serif;
  font-size: 12px;
  line-height: 16px;
  color: #f0f0f0;
  background-color: #131313;
  height: 100vh;
  overflow: hidden;
  padding: 0 7px 4px 7px;
}

button, input, select {
  font: inherit;
  color: inherit;
  background: none;
  border: none;
}

h1, h2 {
  font-size: 12px;
  font-weight: normal;
}

svg {
  display: block;
  flex: none;
}

.defs {
  position: absolute;
  width: 0;
  height: 0;
}

.g { fill: #d5d5d5; }
.b { fill: #74bcf0; }

.caret {
  flex: none;
  border: 3px solid transparent;
  border-top: 4px solid #f0f0f0;
  border-bottom: none;
}

.caret.dark { border-top-color: #2b2b2b; }
.caret.gray { border-top-color: #707070; }

/* What shows around the window */
.desktop-left, .desktop-right {
  position: absolute;
  top: 0;
  bottom: 0;
  width: 20px;
}

.desktop-left {
  left: 0;
  background: linear-gradient(#1c2127 0 32px, #28292b 32px 80px, #151515 80px 544px, #2b2b2b 544px 575px, #111 575px);
}

.desktop-right {
  right: 0;
  background: linear-gradient(#1c2127 0 32px, #28292b 32px 80px, #151515 80px 127px, #1c2127 127px 148px, #9b9b9b 148px 544px, #dcdcdc 544px 986px, #131313 986px);
}

.desktop-status {
  position: absolute;
  left: 16px;
  bottom: -2px;
  display: flex;
  color: #c8c8c8;
}

.desktop-status span {
  padding-right: 11px;
  margin-right: 11px;
  border-right: 1px solid #c8c8c8;
}

/* Window */
.window {
  position: relative;
  height: 100%;
  display: flex;
  flex-direction: column;
  background-color: #383838;
  border: 1px solid #6b2013;
  border-top: none;
  border-radius: 8px;
  overflow: hidden;
}

/* Title bar */
.titlebar {
  height: 32px;
  display: flex;
  align-items: flex-end;
  background-color: #5e2115;
}

.app-button {
  position: absolute;
  left: 0;
  top: 8px;
  z-index: 2;
  width: 41px;
  height: 41px;
  padding: 1px 2px 0 3px;
  display: flex;
  align-items: flex-start;
  gap: 3px;
  border: 1px solid #1c1c1c;
  background: linear-gradient(#c4c4c4, #8a8a8a 50%, #6a6a6a);
}

.app-button .caret { margin-top: 16px; }

.qat {
  display: flex;
  align-items: center;
  height: 24px;
  margin-left: 41px;
  padding: 0 1px 0 4px;
  background-color: #a4a6a9;
  border: 1px solid #8d8f91;
  border-bottom: none;
}

.qat button {
  width: 24px;
  display: flex;
  justify-content: center;
}

.qat .narrow { width: 12px; }

.qat .narrow:last-child { width: 16px; }

.app-title {
  flex: 1;
  height: 24px;
  padding-left: 368px;
  display: flex;
  gap: 12px;
  color: #170d0b;
}

.infocenter {
  display: flex;
  align-items: center;
  height: 24px;
  width: 448px;
  background-color: #a4a6a9;
  border: 1px solid #8d8f91;
}

.infocenter button {
  display: flex;
  justify-content: center;
  align-items: center;
  width: 24px;
}

.infocenter .expand { width: 13px; }

.infocenter .find { width: 25px; }

.infocenter input {
  width: 180px;
  height: 22px;
  padding: 0 3px;
  background-color: #6f716f;
  border: 1px solid #333;
  font-style: italic;
}

.infocenter input::placeholder { color: #cfd2cf; }

.infocenter .sign-in {
  width: 120px;
  justify-content: flex-start;
  gap: 5px;
  padding: 0 6px 0 2px;
}

.sign-in .caret { margin-left: auto; }

.infocenter .with-caret {
  width: 32px;
  gap: 6px;
}

.infocenter .help { margin-left: auto; margin-right: 2px; }

.help b {
  width: 16px;
  height: 16px;
  line-height: 14px;
  border-radius: 50%;
  border: 1px solid #333;
  background-color: #f4f4f4;
  color: #3a4a95;
}

.window-buttons {
  align-self: flex-start;
  display: flex;
  margin-left: 24px;
}

.window-buttons button {
  width: 46px;
  height: 30px;
  display: flex;
  justify-content: center;
  align-items: center;
}

/* Ribbon tabs */
.ribbon-tabs {
  height: 21px;
  display: flex;
  align-items: flex-end;
  padding-left: 46px;
  background-color: #535353;
  border-top: 1px solid #2b2b2b;
  border-bottom: 1px solid #2b2b2b;
}

.ribbon-tabs button {
  height: 18px;
  padding: 0 9px;
  line-height: 16px;
  color: #d0d0d0;
}

.ribbon-tabs .active {
  margin-bottom: -1px;
  height: 19px;
  padding: 0 7px 0 8px;
  color: #fff;
  background: linear-gradient(#757575, #5c5c5c);
  border: 1px solid #2b2b2b;
  border-bottom: none;
}

.ribbon-tabs .hover {
  padding: 0 8px;
  color: #fff;
  background: linear-gradient(#666, #585858);
  box-shadow: inset 0 0 0 1px #777;
}

.ribbon-tabs .ribbon-toggle {
  display: flex;
  align-items: center;
  gap: 5px;
  padding-left: 12px;
}

/* Ribbon */
.ribbon {
  height: 99px;
  display: flex;
  background: linear-gradient(#4b4d4f, #3c3c3b 60%, #383838);
  border-left: 1px solid #777;
  border-bottom: 2px solid #8a8a8a;
  flex: none;
}

.panel {
  flex: none;
  display: flex;
  flex-direction: column;
  border-right: 1px solid #3a3a3a;
  background-color: #5b5b5b;
}

.draw { width: 225px; }
.modify { width: 250px; }
.annotation { width: 189px; }
.layers { width: 273px; }
.block { width: 161px; }
.properties { width: 265px; }
.groups { width: 69px; }
.utilities { width: 97px; }
.clipboard { width: 80px; }
.view { width: 62px; }

.panel h2 {
  position: relative;
  height: 18px;
  display: flex;
  align-items: center;
  justify-content: center;
  gap: 6px;
  margin: 0 1px;
  background: linear-gradient(#505152, #47494a);
}

.panel h2 .caret { border-width: 4px 4px 0 4px; }

.launcher {
  position: absolute;
  right: 4px;
}

.view h2 {
  justify-content: flex-start;
  padding-left: 4px;
}

.tools {
  flex: 1;
  display: flex;
  align-items: flex-start;
}

.big {
  flex: none;
  display: flex;
  flex-direction: column;
  align-items: center;
  padding-top: 6px;
  line-height: 15px;
}

.big svg, .letter-icon {
  height: 32px;
  margin-bottom: 4px;
}

.big .caret { margin-top: 3px; }

.big.line { width: 44px; }
.big.polyline { width: 44px; }
.big.circle { width: 54px; }
.big.arc { width: 38px; }
.big.text { width: 47px; }
.big.dimension { width: 60px; }
.big.layer-props { width: 62px; }
.big.insert { width: 43px; }
.big.match { width: 62px; }
.big.group { width: 43px; }
.big.measure { width: 72px; }
.big.paste { width: 54px; }
.big.base { width: 62px; }

.letter-icon {
  font-family: "Liberation Sans", sans-serif;
  font-size: 40px;
  line-height: 32px;
  color: #d5d5d5;
}

.stack {
  flex: none;
  padding-top: 4px;
}

.small {
  height: 24px;
  display: flex;
  align-items: center;
  gap: 5px;
  white-space: nowrap;
}

.small .caret { margin-left: 2px; }

.draw .stack { margin-left: 6px; }
.modify .stack { width: 70px; margin-left: 1px; }
.modify .stack:first-child { width: 73px; margin-left: 6px; }
.modify .stack:nth-child(2) { width: 68px; margin-left: 0; }
.modify .stack:nth-child(3) { width: 74px; }
.modify .stack:last-child { width: 16px; }
.modify .caret { margin-left: 4px; }
.modify h2 .caret { margin-left: 0; }
.annotation .stack { margin-left: 6px; }
.block .stack { margin-left: 2px; }
.block .small .caret { margin-left: 0; }
.groups .stack { margin-left: 0; }
.groups .small { padding: 0 3px; }
.utilities .stack { margin-left: 2px; }
.clipboard .stack { margin-left: 3px; }

.small.selected {
  height: 22px;
  margin-top: 1px;
  border: 1px solid #2f3c55;
  background: linear-gradient(#6ea6d8, #5a62a8);
}

/* Drop-downs */
.combo {
  height: 22px;
  display: flex;
  align-items: center;
  padding-right: 2px;
  border: 1px solid #2e2e2e;
  background: linear-gradient(#5f5f5f, #4b4b4b);
  position: relative;
}

.combo::after {
  content: "";
  position: absolute;
  right: 2px;
  border: 4px solid transparent;
  border-top: 5px solid #f0f0f0;
  border-bottom: none;
}

.combo select {
  flex: 1;
  min-width: 0;
  height: 20px;
  appearance: none;
}

.combo option { color: #222; }

.swatch {
  width: 14px;
  height: 14px;
  background-color: #e8e80a;
  border: 1px solid #333;
}

.rule {
  width: 64px;
  margin: 0 2px 0 3px;
  border-top: 1px solid #fff;
}

.layer-area {
  flex: 1;
  padding: 5px 1px 0 0;
}

.layer-combo svg { margin-left: 5px; }

.layer-combo .swatch {
  margin-right: 5px;
  margin-left: -5px;
}

.layer-row {
  height: 24px;
  display: flex;
  align-items: center;
  padding-left: 4px;
}

.layer-row button { width: 24px; }

.layer-row .labelled {
  width: auto;
  display: flex;
  align-items: center;
  gap: 5px;
}

.icons { width: 18px; margin-left: 2px; }

.combos {
  flex: 1;
  padding: 5px 2px 0 0;
  display: flex;
  flex-direction: column;
  gap: 1px;
}

.color-combo .swatch {
  width: 16px;
  height: 16px;
  margin: 0 10px 0 12px;
  border-color: #aaa;
}

/* Drawing tabs */
.file-tabs {
  height: 29px;
  flex: none;
  display: flex;
  align-items: flex-end;
  padding-left: 14px;
  border-bottom: 4px solid #5c5c5c;
}

.file-tab {
  position: relative;
  isolation: isolate;
  flex: none;
  width: 137px;
  height: 22px;
  margin-right: -14px;
  padding: 2px 24px 0 13px;
  display: flex;
  align-items: center;
  justify-content: space-between;
  color: #a8b0b6;
  background-color: #727272;
  clip-path: path("M0 22C9 21 7 0 17 0H116C128 0 125 21 137 22z");
}

.file-tab::before {
  content: "";
  position: absolute;
  inset: 0;
  z-index: -1;
  background: linear-gradient(#5e5e5e, #4e4e4e);
  clip-path: path("M1 22C10 21 8 1 18 1H115C127 1 124 21 136 22z");
}

.file-tab i {
  font-style: normal;
  font-size: 10px;
  color: #333;
}

.file-tab.start {
  width: 142px;
  padding-left: 17px;
  clip-path: path("M0 22C12 21 9 0 20 0H121C133 0 130 21 142 22z");
}

.file-tab.start::before { clip-path: path("M1 22C13 21 10 1 21 1H120C132 1 129 21 141 22z"); }

.file-tab.active {
  color: #fff;
  background-color: #a0a0a0;
}

.file-tab.active::before { background: linear-gradient(#868686, #5e5e5e); }

.new-tab {
  width: 23px;
  height: 15px;
  margin: 0 0 3px 10px;
  padding-left: 7px;
  background-color: #545454;
  border-radius: 2px 10px 2px 10px;
}

.tab-overflow { margin: 0 10px 6px auto; }

/* Model space */
.canvas {
  position: relative;
  flex: 1;
  min-height: 0;
  background-color: #212830;
}

.viewport-label {
  position: absolute;
  left: 3px;
  top: 6px;
}

.viewport-buttons {
  position: absolute;
  right: 10px;
  top: 9px;
  display: flex;
  gap: 8px;
}

.viewcube {
  position: absolute;
  right: 17px;
  top: 40px;
  width: 132px;
  display: flex;
  flex-direction: column;
  align-items: center;
}

.compass {
  width: 134px;
  height: 134px;
  display: grid;
  grid-template-columns: 22px 1fr 22px;
  grid-template-rows: 22px 1fr 22px;
  place-items: center;
  font: bold 22px/22px "Liberation Sans", sans-serif;
  color: #a2a2a2;
  background: radial-gradient(circle, transparent 47px, #464646 48px 60px, transparent 61px);
}

.n { grid-area: 1 / 2; }
.w { grid-area: 2 / 1; }
.e { grid-area: 2 / 3; }
.s { grid-area: 3 / 2; }

.cube {
  grid-area: 2 / 2;
  width: 52px;
  height: 52px;
  font-size: 12px;
  color: #4a4a4a;
  background-color: #a0a0a0;
  border: 9px solid #b0b0b0;
  outline: 1px solid #777;
  outline-offset: -1px;
}

.wcs {
  width: 48px;
  height: 17px;
  margin-top: 19px;
  padding: 0 4px;
  display: flex;
  align-items: center;
  justify-content: space-between;
  color: #4c4c4c;
  font-size: 11px;
  background-color: #999;
  border: 1px solid #777;
  border-radius: 4px;
}

.navbar {
  position: absolute;
  right: 5px;
  top: 236px;
  background-color: #5b5b5b;
  border-radius: 4px;
  outline: 1px solid #1a1f25;
}

.drawing {
  position: absolute;
  left: 0;
  top: 0;
  width: 100%;
  height: 100%;
  overflow: visible;
  font-family: Lato, sans-serif;
  font-size: 152px;
  font-weight: 100;
  fill: #e8e80a;
  pointer-events: none;
}

/* the stroke in the background colour thins the letters down to a hairline */
.drawing .plain {
  font-family: Inter, sans-serif;
  stroke: #212830;
  stroke-width: 2px;
}

.drawing .tail { font-size: 138px; }

/* Command line */
.command {
  position: absolute;
  left: 0;
  right: 0;
  bottom: 0;
  width: 771px;
  margin: 0 auto;
  display: flex;
  flex-direction: column;
  align-items: flex-start;
  font-family: "Liberation Mono", monospace;
}

.command p {
  margin: 0 0 4px 62px;
  padding: 0 2px;
  color: #fff;
  background-color: #5c5c5c;
  border-radius: 2px;
}

.command .mid { color: #ddd; background-color: #555; }
.command .old { color: #b4b4b4; background-color: #4c4c4c; }

.command-bar {
  width: 100%;
  height: 27px;
  margin-top: -3px;
  display: flex;
  align-items: center;
  gap: 7px;
  padding-left: 4px;
  background: linear-gradient(#686868, #3c3c3c);
  border: 1px solid #777;
  border-radius: 3px;
}

.grip {
  width: 5px;
  height: 17px;
  border-left: 2px dotted #999;
  border-right: 2px dotted #999;
}

.command-entry {
  flex: 1;
  height: 25px;
  display: flex;
  align-items: center;
  gap: 4px;
  padding: 0 4px 0 3px;
  background-color: #bcbdbf;
  border-radius: 2px;
}

.command-entry input {
  flex: 1;
  padding-left: 4px;
  font-style: italic;
  color: #333;
}

.command-entry input::placeholder { color: #757575; }

/* Bottom bar */
.bottombar {
  flex: none;
  height: 28px;
  display: flex;
  justify-content: space-between;
  border-top: 1px solid #595959;
}

.layout-tabs {
  display: flex;
  align-items: flex-start;
  padding-left: 13px;
}

.layout-tabs button {
  height: 17px;
  padding: 0 10px;
  line-height: 16px;
  color: #a8b0b6;
  background: linear-gradient(#4a4a4a, #626262);
  border-radius: 2px 2px 8px 8px;
}

.layout-tabs .active {
  color: #fff;
  font-weight: bold;
  background: linear-gradient(#5c5c5c, #8a8a8a);
}

.layout-tabs .add {
  margin-left: 5px;
  padding: 0 7px;
  border-radius: 10px 2px 10px 2px;
}

.status {
  display: flex;
  gap: 2px;
  padding-right: 1px;
}

.cell {
  height: 26px;
  display: flex;
  align-items: center;
  background-color: #4e4e4e;
  border: 1px solid #7c7c7c;
}

.cell.joined {
  margin-right: -2px;
  border-right: none;
}

.cell button {
  width: 24px;
  height: 22px;
  display: flex;
  align-items: center;
  justify-content: center;
}

.cell .drop { width: 15px; }

.drop .caret, .scale .caret { border-width: 5px 4px 0 4px; }

.cell .model { width: 46px; }

.cell .scale {
  width: 32px;
  gap: 3px;
}

.cell .on {
  background-color: #5c8fc6;
  box-shadow: inset 1px 0 #4e4e4e;
}
```
